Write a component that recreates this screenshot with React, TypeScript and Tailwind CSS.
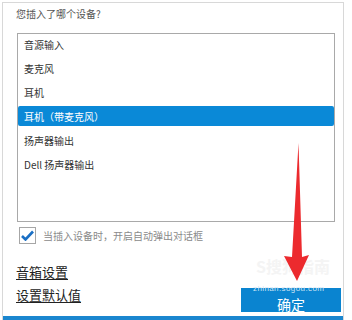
import { useState } from 'react';

const devices = ['音源输入', '麦克风', '耳机', '耳机（带麦克风）', '扬声器输出', 'Dell 扬声器输出'];

const font = { fontFamily: '"Noto Sans CJK SC", "Liberation Sans", sans-serif' };

export default function App() {
  const [selected, setSelected] = useState(3);
  const [autoPopup, setAutoPopup] = useState(true);

  return (
    <div className="relative w-[352px] h-[320px] bg-white pt-[2px] pl-[2px] overflow-hidden" style={font}>
      {/* Dialog frame */}
      <div className="w-[342px] h-[318px] border-l border-t border-r border-[#d8d8d8] flex flex-col">
        <p className="ml-[13px] mt-[5px] text-[10px] leading-[12px] text-[#555]">您插入了哪个设备?</p>

        {/* Device list */}
        <div className="ml-[14px] mt-[13px] w-[318px] h-[189px] border border-[#a9a9a9] flex flex-col gap-[4px]">
          {devices.map((d, i) => (
            <div
              key={d}
              onClick={() => setSelected(i)}
              className={
                i === selected
                  ? 'h-[20px] pl-[6px] flex items-center rounded-[2px] bg-[#0a89d7] text-white text-[10px]'
                  : 'h-[20px] pl-[6px] flex items-center text-[#333] text-[10px]'
              }
            >
              {d}
            </div>
          ))}
        </div>

        {/* Auto popup checkbox */}
        <label className="ml-[16px] mt-[5px] flex items-center gap-[7px]">
          <span
            onClick={() => setAutoPopup(!autoPopup)}
            className="w-[17px] h-[17px] border border-[#a6a6a6] bg-white flex items-center justify-center"
          >
            {autoPopup && (
              <svg width="13" height="11" viewBox="0 0 13 11">
                <path d="M1 6 L4.5 9.5 L12 1.5" fill="none" stroke="#1a6fc4" strokeWidth="2.6" strokeLinejoin="miter" />
              </svg>
            )}
          </span>
          <span className="text-[10px] leading-[12px] text-[#8a8a8a]">当插入设备时，开启自动弹出对话框</span>
        </label>

        {/* Links + confirm */}
        <div className="flex items-start justify-between">
          <div className="ml-[13px] mt-[20px] flex flex-col gap-[7px]">
            <a className="text-[13px] leading-[16px] text-[#222] underline underline-offset-2">音箱设置</a>
            <a className="text-[13px] leading-[16px] text-[#222] underline underline-offset-2">设置默认值</a>
          </div>
          <button className="relative mt-[44px] mr-[2px] w-[100px] h-[24px] bg-[#0a84d0] text-white flex items-end justify-center pb-[1px]">
            <span className="text-[14px] leading-[14px]">确定</span>
            <span className="absolute left-[12px] top-[-3px] text-[8px] leading-[8px] text-[#cfe4f4] tracking-[0.4px]" style={{ fontFamily: '"Liberation Sans", sans-serif' }}>
              zhinan.sogou.com
            </span>
          </button>
        </div>

        <div className="mt-auto h-[4px] bg-[#1a86cf]" />
      </div>

      {/* Watermark */}
      <div className="absolute left-[256px] top-[256px] text-[16px] leading-[20px] font-bold text-[#f4f4f4]">S搜狗指南</div>

      {/* Annotation arrow */}
      <svg className="absolute left-0 top-0" width="352" height="320" viewBox="0 0 352 320">
        <polygon points="298.5,143 302,257 309,255 297,281 284,256 292,257" fill="#ec2a2e" />
      </svg>
    </div>
  );
}
